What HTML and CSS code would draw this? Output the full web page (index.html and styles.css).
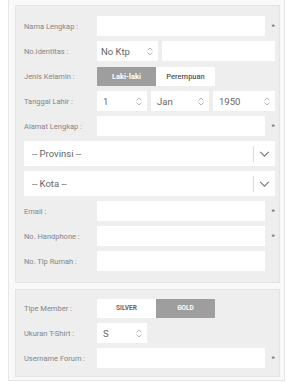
FILE: index.html
```html
<!DOCTYPE html>
<html lang="id">
<head>
  <meta charset="UTF-8">
  <title>Pendaftaran</title>
  <link rel="stylesheet" href="styles.css">
</head>
<body>
  <div class="page">
    <div class="panel">
      <div class="row">
        <div class="lbl">Nama Lengkap :</div>
        <div class="input"></div>
        <div class="req">*</div>
      </div>
      <div class="row">
        <div class="lbl">No.Identitas :</div>
        <div class="wide split">
          <div class="select ktp"><span>No Ktp</span><svg class="spin" viewBox="0 0 8 13"><path d="M1.5 5.5L4 3L6.5 5.5M1.5 7.5L4 10L6.5 7.5"/></svg></div>
          <div class="input grow"></div>
        </div>
      </div>
      <div class="row">
        <div class="lbl">Jenis Kelamin :</div>
        <div class="toggle">
          <div class="opt active">Laki-laki</div>
          <div class="opt">Perempuan</div>
        </div>
      </div>
      <div class="row">
        <div class="lbl">Tanggal Lahir :</div>
        <div class="wide split">
          <div class="select day"><span>1</span><svg class="spin" viewBox="0 0 8 13"><path d="M1.5 5.5L4 3L6.5 5.5M1.5 7.5L4 10L6.5 7.5"/></svg></div>
          <div class="select month"><span>Jan</span><svg class="spin" viewBox="0 0 8 13"><path d="M1.5 5.5L4 3L6.5 5.5M1.5 7.5L4 10L6.5 7.5"/></svg></div>
          <div class="select year"><span>1950</span><svg class="spin" viewBox="0 0 8 13"><path d="M1.5 5.5L4 3L6.5 5.5M1.5 7.5L4 10L6.5 7.5"/></svg></div>
        </div>
      </div>
      <div class="row">
        <div class="lbl">Alamat Lengkap :</div>
        <div class="input"></div>
        <div class="req">*</div>
      </div>
      <div class="row big">
        <div class="dropdown"><span>-- Provinsi --</span><div class="caret"><svg viewBox="0 0 12 7"><path d="M1 1L6 6L11 1"/></svg></div></div>
      </div>
      <div class="row big">
        <div class="dropdown"><span>-- Kota --</span><div class="caret"><svg viewBox="0 0 12 7"><path d="M1 1L6 6L11 1"/></svg></div></div>
      </div>
      <div class="row">
        <div class="lbl">Email :</div>
        <div class="input"></div>
        <div class="req">*</div>
      </div>
      <div class="row">
        <div class="lbl">No. Handphone :</div>
        <div class="input"></div>
        <div class="req">*</div>
      </div>
      <div class="row">
        <div class="lbl">No. Tlp Rumah :</div>
        <div class="input"></div>
        <div class="req"></div>
      </div>
    </div>
    <div class="panel">
      <div class="row">
        <div class="lbl">Tipe Member :</div>
        <div class="toggle caps">
          <div class="opt">Silver</div>
          <div class="opt active">Gold</div>
        </div>
      </div>
      <div class="row">
        <div class="lbl">Ukuran T-Shirt :</div>
        <div class="select day"><span>S</span><svg class="spin" viewBox="0 0 8 13"><path d="M1.5 5.5L4 3L6.5 5.5M1.5 7.5L4 10L6.5 7.5"/></svg></div>
      </div>
      <div class="row">
        <div class="lbl">Username Forum :</div>
        <div class="input"></div>
        <div class="req">*</div>
      </div>
    </div>
  </div>
</body>
</html>
```

FILE: styles.css
```css
body {
  margin: 0;
  background: #fff;
  font-family: Roboto, Arial, sans-serif;
}
.page {
  box-sizing: border-box;
  width: 277px;
  margin-left: 8px;
  padding: 5px 4px 3px 6px;
  background: #f9f9f9;
  border: 1px solid #e6e6e6;
  border-top: none;
}
.panel {
  display: flex;
  flex-direction: column;
  gap: 5px;
  padding: 10px 4px 11px 8px;
  background: #eeeeee;
  border: 1px solid #e4e4e4;
}
.panel + .panel {
  margin-top: 6px;
  padding-top: 8px;
  padding-bottom: 8px;
}
.row {
  display: flex;
  align-items: center;
  height: 20px;
}
.row.big {
  height: 25px;
}
.lbl {
  width: 73px;
  flex: none;
  font-size: 7.5px;
  color: #858585;
}
.input {
  box-sizing: border-box;
  width: 168px;
  height: 100%;
  background: #fff;
}
.input.grow {
  flex: 1;
  width: auto;
}
.req {
  width: 10px;
  text-align: right;
  font-size: 8px;
  color: #666;
}
.wide {
  width: 178px;
  height: 100%;
}
.split {
  display: flex;
  gap: 4px;
}
.select {
  box-sizing: border-box;
  height: 100%;
  display: flex;
  align-items: center;
  justify-content: space-between;
  padding: 0 4px 0 4px;
  background: #fff;
  font-size: 9.5px;
  color: #666;
}
.select.ktp { width: 61px; }
.select.day { width: 50px; padding-left: 6px; }
.select.month { width: 58px; padding-left: 6px; }
.select.year { width: 62px; padding-left: 6px; }
.spin {
  width: 8px;
  height: 13px;
  fill: none;
  stroke: #aaa;
  stroke-width: 0.9;
}
.toggle {
  display: flex;
  height: 19px;
}
.opt {
  width: 59px;
  display: flex;
  align-items: center;
  justify-content: center;
  background: #fff;
  font-size: 7.5px;
  font-weight: 500;
  color: #555;
}
.opt.active {
  background: #9e9e9e;
  color: #fff;
  font-weight: 700;
}
.caps .opt {
  text-transform: uppercase;
  font-size: 6.5px;
  font-weight: 700;
  color: #666;
}
.caps .opt.active {
  color: #fff;
}
.dropdown {
  box-sizing: border-box;
  width: 251px;
  height: 100%;
  display: flex;
  align-items: center;
  justify-content: space-between;
  padding-left: 8px;
  background: #fff;
  font-size: 9.5px;
  color: #666;
}
.caret {
  width: 21px;
  height: 16px;
  display: flex;
  align-items: center;
  justify-content: center;
  border-left: 1px solid #dcdcdc;
}
.caret svg {
  width: 11px;
  height: 6px;
  fill: none;
  stroke: #777;
  stroke-width: 1.3;
}
```
